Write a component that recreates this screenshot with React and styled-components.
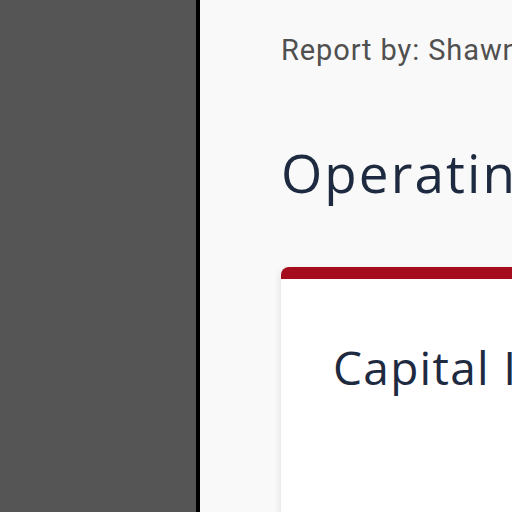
import React from "react";
import styled, { createGlobalStyle } from "styled-components";

const Global = createGlobalStyle`
  html, body { margin: 0; padding: 0; height: 100%; overflow: hidden; }
  #root { height: 100%; }
`;

const Page = styled.div`
  display: flex;
  width: 512px;
  height: 512px;
  overflow: hidden;
  background: #f9f9f9;
`;

const Sidebar = styled.aside`
  flex: 0 0 196px;
  background: #555555;
  border-right: 4px solid #000;
`;

const Main = styled.main`
  flex: 1 0 auto;
  width: 900px;
  padding: 33px 0 0 81px;
  font-family: "Open Sans", sans-serif;
`;

const Byline = styled.div`
  font-family: Roboto, "Liberation Sans", sans-serif;
  font-size: 29px;
  line-height: 35px;
  color: #505050;
  letter-spacing: 0.9px;
  white-space: nowrap;
`;

const Title = styled.h1`
  margin: 70px 0 0;
  font-size: 53px;
  font-weight: 400;
  line-height: 69px;
  letter-spacing: 2.1px;
  color: #1e2a3f;
  white-space: nowrap;
`;

const Card = styled.section`
  margin-top: 60px;
  background: #fff;
  border-top: 12px solid #a50d1e;
  border-radius: 8px 0 0 0;
  box-shadow: -2px 2px 6px rgba(0, 0, 0, 0.08);
  height: 400px;
  padding: 57px 0 0 52px;
`;

const CardTitle = styled.h2`
  margin: 0;
  font-size: 46px;
  font-weight: 400;
  letter-spacing: 1.3px;
  color: #1e2a3f;
  white-space: nowrap;
`;

export default function App() {
  return (
    <Page>
      <Global />
      <Sidebar />
      <Main>
        <Byline>Report by: Shawn Roberts</Byline>
        <Title>Operating Budget Overview</Title>
        <Card>
          <CardTitle>Capital Improvements</CardTitle>
        </Card>
      </Main>
    </Page>
  );
}
